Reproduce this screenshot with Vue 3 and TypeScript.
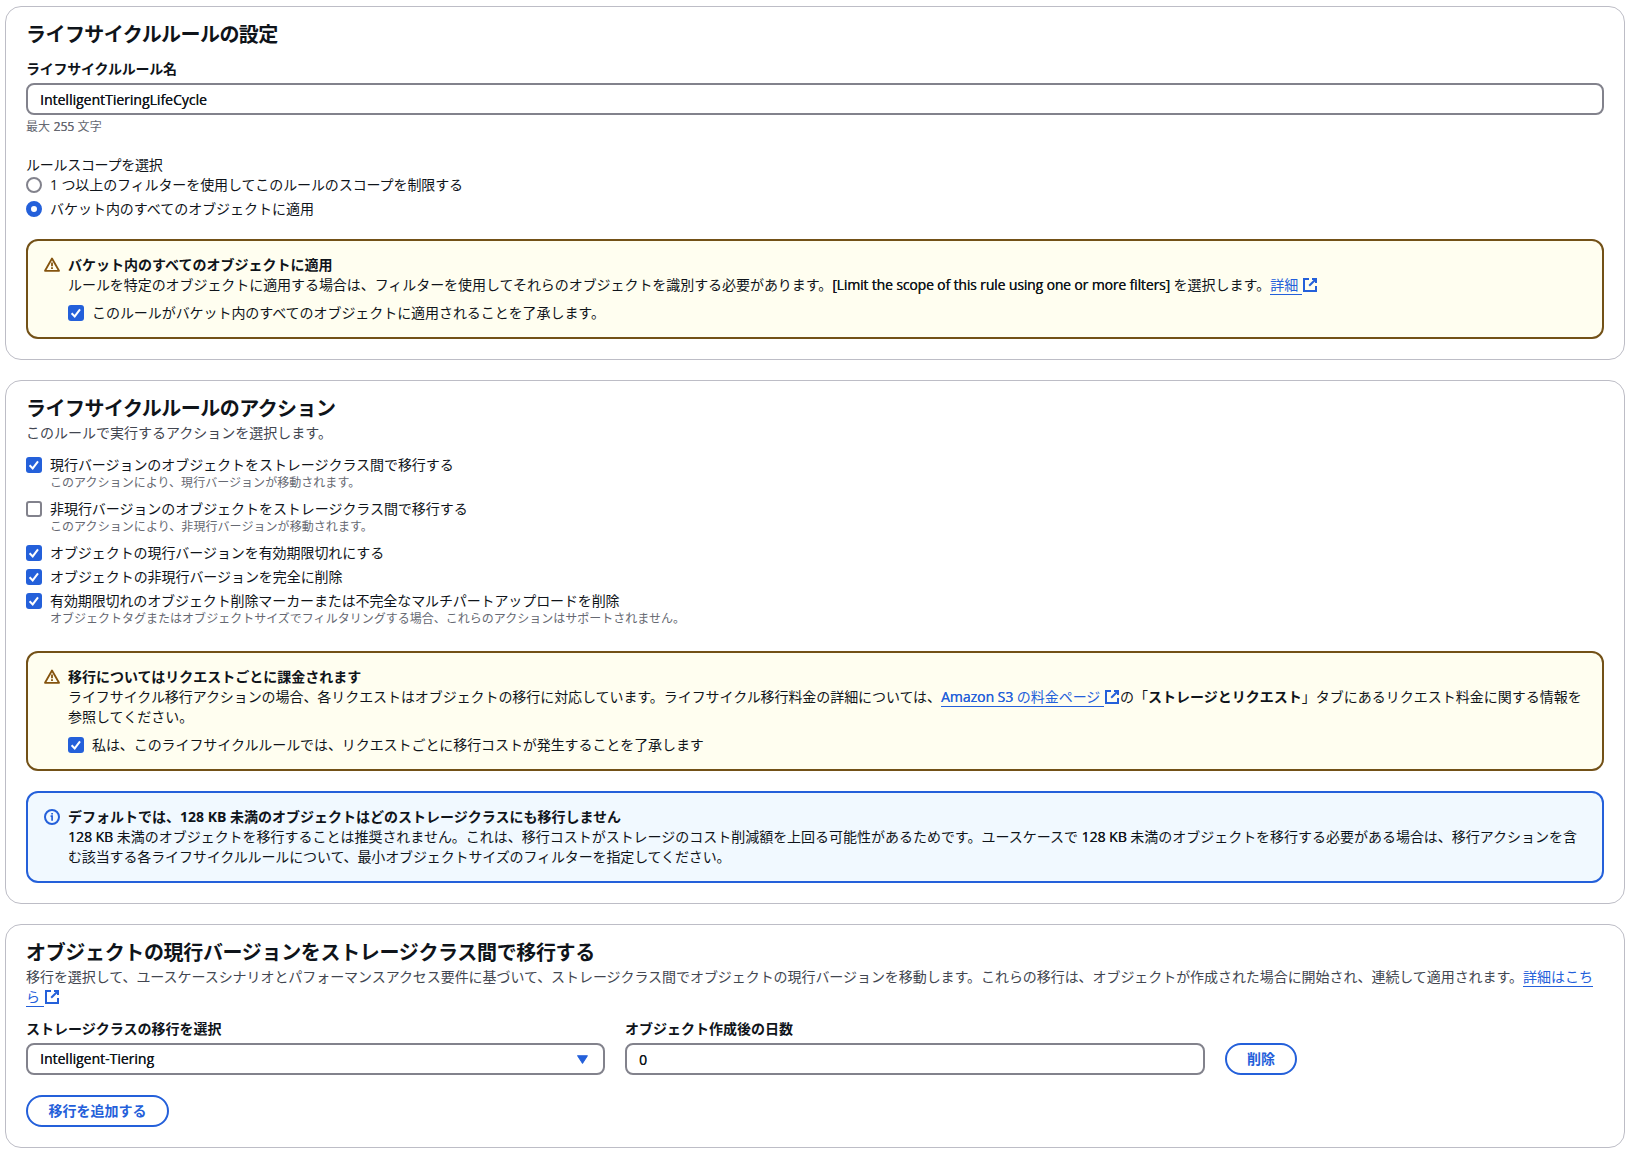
<script setup lang="ts">
import { h, ref } from 'vue'

interface Option {
  label: string
  note?: string
  checked: boolean
  track: number
  noteTrack?: number
}

const ruleName = ref('IntelligentTieringLifeCycle')
const days = ref('0')
const scope = ref(1)

const scopes = [
  { label: '1 つ以上のフィルターを使用してこのルールのスコープを制限する', track: -0.1 },
  { label: 'バケット内のすべてのオブジェクトに適用', track: -0.03 },
]

const actions = ref<Option[]>([
  {
    label: '現行バージョンのオブジェクトをストレージクラス間で移行する',
    note: 'このアクションにより、現行バージョンが移動されます。',
    checked: true,
    track: -0.05,
    noteTrack: 0.04,
  },
  {
    label: '非現行バージョンのオブジェクトをストレージクラス間で移行する',
    note: 'このアクションにより、非現行バージョンが移動されます。',
    checked: false,
    track: -0.05,
    noteTrack: 0.06,
  },
  { label: 'オブジェクトの現行バージョンを有効期限切れにする', checked: true, track: -0.07 },
  { label: 'オブジェクトの非現行バージョンを完全に削除', checked: true, track: -0.06 },
  {
    label: '有効期限切れのオブジェクト削除マーカーまたは不完全なマルチパートアップロードを削除',
    note: 'オブジェクトタグまたはオブジェクトサイズでフィルタリングする場合、これらのアクションはサポートされません。',
    checked: true,
    track: -0.11,
    noteTrack: 0.01,
  },
])

const track = (px = 0) => ({ letterSpacing: `${px}px` })

const svg = (children: ReturnType<typeof h>[], width = 2) =>
  h(
    'svg',
    { viewBox: '0 0 16 16', width: 16, height: 16, fill: 'none', stroke: 'currentColor', 'stroke-width': width },
    children,
  )

const ExternalIcon = () =>
  svg([h('path', { d: 'M10 2h4v4' }), h('path', { d: 'm7.2 8.8 6.6-6.6' }), h('path', { d: 'M14 9v5H2V2h5' })])

const WarningIcon = () =>
  svg(
    [
      h('path', { d: 'M8 1.5 15 13.8H1L8 1.5Z', 'stroke-linejoin': 'round' }),
      h('path', { d: 'M8 5.4v3.8' }),
      h('path', { d: 'M8 10.2v1.7' }),
    ],
    1.8,
  )

const InfoIcon = () =>
  svg([
    h('circle', { cx: 8, cy: 8, r: 7 }),
    h('path', { d: 'M8.1 4v1.6M6.6 7.2h1.5v4.6', 'stroke-width': 1.7 }),
  ])

const TickBox = (props: { checked: boolean }) =>
  h('svg', { viewBox: '0 0 16 16', width: 16, height: 16 }, [
    props.checked
      ? h('rect', { width: 16, height: 16, rx: 3, fill: '#2460da' })
      : h('rect', { x: 1, y: 1, width: 14, height: 14, rx: 2, fill: '#fff', stroke: '#82828c', 'stroke-width': 2 }),
    props.checked
      ? h('path', { d: 'm3.6 8.2 3.1 3.2 5.3-7', fill: 'none', stroke: '#fff', 'stroke-width': 2 })
      : null,
  ])
TickBox.props = ['checked']
</script>

<template>
  <main class="page">
    <section class="card">
      <h2 class="title" :style="track(-0.56)">ライフサイクルルールの設定</h2>
      <label class="label first-label" :style="track(-0.22)">ライフサイクルルール名</label>
      <input v-model="ruleName" class="field latin" type="text" />
      <p class="hint" :style="track(0.1)">最大 <span class="latin">255</span> 文字</p>
      <p class="scope-title" :style="track(-0.28)">ルールスコープを選択</p>
      <div class="radios">
        <div v-for="(s, i) in scopes" :key="i" class="choice" @click="scope = i">
          <span class="radio" :class="{ on: scope === i }"></span>
          <span :style="track(s.track)">{{ s.label }}</span>
        </div>
      </div>
      <div class="alert warning gap-scope">
        <WarningIcon class="alert-icon" />
        <div class="alert-body">
          <p class="strong">バケット内のすべてのオブジェクトに適用</p>
          <p><span :style="track(-0.06)">ルールを特定のオブジェクトに適用する場合は、フィルターを使用してそれらのオブジェクトを識別する必要があります。</span><span class="latin" :style="track(-0.15)">[Limit the scope of this rule using one or more filters]</span> を選択します。<a class="link"><span class="u">詳細&nbsp;</span><ExternalIcon /></a></p>
          <div class="choice ack">
            <TickBox :checked="true" />
            <span :style="track(-0.06)">このルールがバケット内のすべてのオブジェクトに適用されることを了承します。</span>
          </div>
        </div>
      </div>
    </section>

    <section class="card">
      <h2 class="title" :style="track(-0.53)">ライフサイクルルールのアクション</h2>
      <p class="desc">このルールで実行するアクションを選択します。</p>
      <div class="actions">
        <div v-for="(a, i) in actions" :key="i" class="choice" :class="{ noted: a.note && i < 4 }" @click="a.checked = !a.checked">
          <TickBox :checked="a.checked" />
          <div>
            <p :style="track(a.track)">{{ a.label }}</p>
            <p v-if="a.note" class="note" :style="track(a.noteTrack)">{{ a.note }}</p>
          </div>
        </div>
      </div>
      <div class="alert warning gap-actions">
        <WarningIcon class="alert-icon" />
        <div class="alert-body">
          <p class="strong">移行についてはリクエストごとに課金されます</p>
          <p><span :style="track(-0.07)">ライフサイクル移行アクションの場合、各リクエストはオブジェクトの移行に対応しています。ライフサイクル移行料金の詳細については、</span><a class="link"><span class="u" :style="track(-0.03)"><span class="latin">Amazon S3</span> の料金ページ&nbsp;</span><ExternalIcon /></a>の「<b>ストレージとリクエスト</b>」タブにあるリクエスト料金に関する情報を<br /><span>参照してください。</span></p>
          <div class="choice ack">
            <TickBox :checked="true" />
            <span :style="track(-0.08)">私は、このライフサイクルルールでは、リクエストごとに移行コストが発生することを了承します</span>
          </div>
        </div>
      </div>
      <div class="alert info">
        <InfoIcon class="alert-icon" />
        <div class="alert-body">
          <p class="strong">デフォルトでは、128 KB 未満のオブジェクトはどのストレージクラスにも移行しません</p>
          <p><span :style="track(-0.02)"><span class="latin">128 KB</span> 未満のオブジェクトを移行することは推奨されません。これは、移行コストがストレージのコスト削減額を上回る可能性があるためです。ユースケースで <span class="latin">128 KB</span> 未満のオブジェクトを移行する必要がある場合は、移行アクションを含</span><br /><span :style="track(-0.13)">む該当する各ライフサイクルルールについて、最小オブジェクトサイズのフィルターを指定してください。</span></p>
        </div>
      </div>
    </section>

    <section class="card">
      <h2 class="title" :style="track(-0.34)">オブジェクトの現行バージョンをストレージクラス間で移行する</h2>
      <p class="desc"><span :style="track(-0.06)">移行を選択して、ユースケースシナリオとパフォーマンスアクセス要件に基づいて、ストレージクラス間でオブジェクトの現行バージョンを移動します。これらの移行は、オブジェクトが作成された場合に開始され、連続して適用されます。</span><a class="link"><span class="u">詳細はこち<br />ら&nbsp;</span><ExternalIcon /></a></p>
      <div class="transition">
        <div class="column">
          <label class="label">ストレージクラスの移行を選択</label>
          <button class="field select latin" type="button">
            <span>Intelligent-Tiering</span>
            <svg viewBox="0 0 10 8" width="11" height="9"><path d="M.6.6h8.8L5 7.4Z" fill="currentColor" stroke="currentColor" stroke-width="1" stroke-linejoin="round" /></svg>
          </button>
        </div>
        <div class="column">
          <label class="label">オブジェクト作成後の日数</label>
          <input v-model="days" class="field latin" type="text" />
        </div>
        <button class="button" type="button">削除</button>
      </div>
      <button class="button add" type="button">移行を追加する</button>
    </section>
  </main>
</template>

<style>
body {
  margin: 0;
  background: #fff;
}
</style>

<style scoped>
* {
  box-sizing: border-box;
}
.page {
  display: flex;
  flex-direction: column;
  gap: 20px;
  padding: 6px 8px 10px 5px;
  font: 14px/20px 'Open Sans', 'Noto Sans CJK JP', sans-serif;
  color: #0f141a;
}
p,
h2 {
  margin: 0;
  white-space: nowrap;
}
.card {
  border: 1px solid #bdbdc6;
  border-radius: 16px;
  padding: 16px 20px 20px;
}
.title {
  font-size: 20px;
  line-height: 24px;
  font-weight: 700;
}
.label {
  display: block;
  font-weight: 700;
  margin-bottom: 4px;
  white-space: nowrap;
}
.first-label {
  margin-top: 12px;
}
.latin {
  text-shadow: 0.25px 0 0 currentColor;
}
.field {
  display: block;
  width: 100%;
  height: 32px;
  border: 2px solid #82828c;
  border-radius: 8px;
  background: #fff;
  padding: 1px 12px 0;
  font: inherit;
  color: inherit;
  outline: none;
}
.hint {
  margin-top: 4px;
  font-size: 12px;
  line-height: 16px;
  color: #656871;
}
.scope-title {
  margin-top: 20px;
}
.radios {
  display: flex;
  flex-direction: column;
  gap: 4px;
}
.choice {
  display: flex;
  gap: 8px;
  white-space: nowrap;
}
.choice > svg,
.radio {
  flex: none;
  margin-top: 2px;
}
.radio {
  width: 16px;
  height: 16px;
  border: 2px solid #82828c;
  border-radius: 50%;
  background: #fff;
}
.radio.on {
  border: 5px solid #2460da;
}
.gap-scope {
  margin-top: 20px;
}
.gap-actions {
  margin: 24px 0 20px;
}
.alert {
  display: flex;
  gap: 8px;
  border: 2px solid;
  border-radius: 12px;
  padding: 14px 16px;
}
.alert-icon {
  flex: none;
  margin-top: 2px;
}
.alert-body {
  color: #0f141a;
}
.warning {
  border-color: #735117;
  background: #fffef0;
  color: #85540f;
}
.info {
  border-color: #2460da;
  background: #f1f9ff;
  color: #2460da;
}
.strong {
  font-weight: 700;
}
.ack {
  margin-top: 8px;
}
.link {
  color: #2460da;
}
.link svg {
  vertical-align: -3px;
}
.u {
  padding-bottom: 1px;
  background: linear-gradient(#2460da, #2460da) 0 100% / 100% 1px no-repeat;
}
.desc {
  margin-top: 2px;
  color: #424650;
}
.actions {
  display: flex;
  flex-direction: column;
  gap: 4px;
  margin-top: 12px;
}
.noted {
  margin-bottom: 4px;
}
.note {
  font-size: 12px;
  line-height: 16px;
  color: #656871;
}
.transition {
  display: flex;
  align-items: flex-end;
  gap: 20px;
  margin-top: 12px;
}
.column {
  width: 579px;
}
.column + .column {
  width: 580px;
}
.select {
  display: flex;
  align-items: center;
  justify-content: space-between;
  padding: 0 15px 0 12px;
}
.select svg {
  color: #2460da;
}
.button {
  height: 32px;
  border: 2px solid #2460da;
  border-radius: 16px;
  background: #fff;
  padding: 0 20px;
  font: inherit;
  font-weight: 700;
  color: #2460da;
}
.add {
  display: block;
  margin-top: 20px;
  padding: 0 20.5px;
}
</style>
